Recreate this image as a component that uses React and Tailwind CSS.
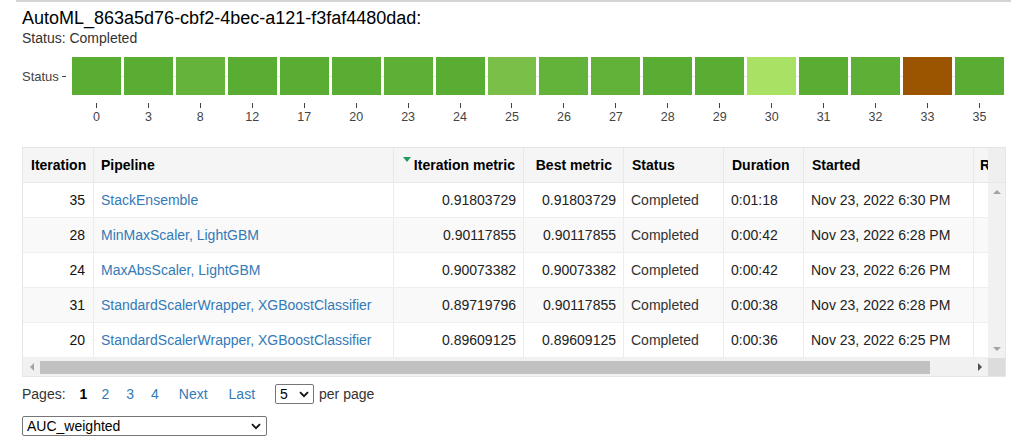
import { useState } from "react";

// Iterations shown in the status strip
const bars = [
  { id: 0, color: "#5aad33" },
  { id: 3, color: "#5aad33" },
  { id: 8, color: "#65b33a" },
  { id: 12, color: "#5aad33" },
  { id: 17, color: "#5aad33" },
  { id: 20, color: "#5aad33" },
  { id: 23, color: "#5eaf36" },
  { id: 24, color: "#5aad33" },
  { id: 25, color: "#7ac048" },
  { id: 26, color: "#63b23a" },
  { id: 27, color: "#62b138" },
  { id: 28, color: "#5aad33" },
  { id: 29, color: "#5aad33" },
  { id: 30, color: "#a9e165" },
  { id: 31, color: "#5aad33" },
  { id: 32, color: "#5eaf35" },
  { id: 33, color: "#9b5400" },
  { id: 35, color: "#5aad33" },
];

const rows = [
  ["35", "StackEnsemble", "0.91803729", "0.91803729", "Completed", "0:01:18", "Nov 23, 2022 6:30 PM"],
  ["28", "MinMaxScaler, LightGBM", "0.90117855", "0.90117855", "Completed", "0:00:42", "Nov 23, 2022 6:28 PM"],
  ["24", "MaxAbsScaler, LightGBM", "0.90073382", "0.90073382", "Completed", "0:00:42", "Nov 23, 2022 6:26 PM"],
  ["31", "StandardScalerWrapper, XGBoostClassifier", "0.89719796", "0.90117855", "Completed", "0:00:38", "Nov 23, 2022 6:28 PM"],
  ["20", "StandardScalerWrapper, XGBoostClassifier", "0.89609125", "0.89609125", "Completed", "0:00:36", "Nov 23, 2022 6:25 PM"],
];

const Chevron = () => (
  <svg width="10" height="7" viewBox="0 0 10 7">
    <path d="M1 1.2 L5 5.2 L9 1.2" fill="none" stroke="#111" strokeWidth="1.8" />
  </svg>
);

export default function App() {
  const [page, setPage] = useState(1);

  return (
    <div className="w-[1021px] h-[446px] bg-white overflow-hidden text-[#222]" style={{ fontFamily: '"Liberation Sans", Arial, sans-serif' }}>
      <div className="ml-[16px] w-[995px] h-[2px] bg-[#d4d4d4]" />

      <div className="pl-[22px]">
        <div className="mt-[6px] text-[18px] leading-[21px] text-black">
          AutoML_863a5d76-cbf2-4bec-a121-f3faf4480dad:
        </div>
        <div className="mt-[1px] text-[14px] leading-[16px] text-[#333]">Status: Completed</div>

        {/* status strip */}
        <div className="flex mt-[11px]">
          <div className="w-[50px] h-[38px] flex items-center justify-end text-[13px] text-[#444]">
            <span className="mt-[1px]">Status</span>
            <span className="w-[5px] h-px bg-[#444] ml-[3px] mr-[6px]" />
          </div>
          <div className="relative w-[932px] h-[38px]">
            <div className="absolute left-0 right-0 top-[19px] h-px bg-[#e6e6e6]" />
            <div className="relative flex gap-[3px] h-full">
              {bars.map((b) => (
                <div key={b.id} className="flex-1" style={{ backgroundColor: b.color }} />
              ))}
            </div>
          </div>
        </div>
        <div className="flex ml-[50px] w-[932px] gap-[3px]">
          {bars.map((b) => (
            <div key={b.id} className="flex-1 flex flex-col items-center">
              <div className="mt-[8px] w-px h-[5px] bg-[#444]" />
              <div className="mt-[2px] text-[12.5px] leading-[14px] text-[#444]">{b.id}</div>
            </div>
          ))}
        </div>

        {/* runs table */}
        <div className="mt-[23px] w-[984px] border border-[#e6e6e6] text-[14px]">
          <div className="flex">
            <div className="w-[965px] overflow-hidden">
              <div className="flex h-[35px] bg-[#f5f5f5] border-b border-[#e8e8e8] font-bold text-black whitespace-nowrap">
                <div className="w-[71px] shrink-0 border-r border-[#e8e8e8] pl-[8px] flex items-center">Iteration</div>
                <div className="w-[300px] shrink-0 border-r border-[#e8e8e8] pl-[7px] flex items-center">Pipeline</div>
                <div className="w-[130px] shrink-0 border-r border-[#e8e8e8] pr-[8px] flex items-center justify-end">
                  <span className="mb-[12px] mr-[3px] w-0 h-0 border-l-[4px] border-r-[4px] border-t-[5px] border-l-transparent border-r-transparent border-t-[#1e9c5a]" />
                  Iteration metric
                </div>
                <div className="w-[100px] shrink-0 border-r border-[#e8e8e8] pr-[11px] flex items-center justify-end">Best metric</div>
                <div className="w-[100px] shrink-0 border-r border-[#e8e8e8] pl-[8px] flex items-center">Status</div>
                <div className="w-[80px] shrink-0 border-r border-[#e8e8e8] pl-[8px] flex items-center">Duration</div>
                <div className="w-[170px] shrink-0 border-r border-[#e8e8e8] pl-[8px] flex items-center">Started</div>
                <div className="w-[100px] shrink-0 pl-[6px] flex items-center">Run Id</div>
              </div>
              {rows.map((r, i) => (
                <div
                  key={i}
                  className={`flex h-[35px] border-b border-[#efefef] whitespace-nowrap ${i % 2 === 1 ? "bg-[#f9f9f9]" : "bg-white"}`}
                >
                  <div className="w-[71px] shrink-0 border-r border-[#ececec] pr-[8px] flex items-center justify-end text-[#111]">{r[0]}</div>
                  <div className="w-[300px] shrink-0 border-r border-[#ececec] pl-[7px] flex items-center text-[#337ab7]">{r[1]}</div>
                  <div className="w-[130px] shrink-0 border-r border-[#ececec] pr-[7px] flex items-center justify-end">{r[2]}</div>
                  <div className="w-[100px] shrink-0 border-r border-[#ececec] pr-[7px] flex items-center justify-end">{r[3]}</div>
                  <div className="w-[100px] shrink-0 border-r border-[#ececec] pl-[7px] flex items-center text-[#333]">{r[4]}</div>
                  <div className="w-[80px] shrink-0 border-r border-[#ececec] pl-[7px] flex items-center">{r[5]}</div>
                  <div className="w-[170px] shrink-0 border-r border-[#ececec] pl-[7px] flex items-center">{r[6]}</div>
                  <div className="w-[100px] shrink-0" />
                </div>
              ))}
            </div>
            <div className="w-[17px] flex flex-col">
              <div className="h-[35px] bg-[#efefef] border-b border-[#e8e8e8]" />
              <div className="flex-1 bg-[#f1f1f1] flex flex-col justify-between items-center py-[7px]">
                <span className="w-0 h-0 border-l-[4px] border-r-[4px] border-b-[4px] border-l-transparent border-r-transparent border-b-[#a3a3a3]" />
                <span className="w-0 h-0 border-l-[4px] border-r-[4px] border-t-[4px] border-l-transparent border-r-transparent border-t-[#a3a3a3]" />
              </div>
            </div>
          </div>
          <div className="flex h-[18px]">
            <div className="w-[965px] bg-[#f1f1f1] flex items-center">
              <div className="w-[17px] flex justify-center">
                <span className="w-0 h-0 border-t-[4px] border-b-[4px] border-r-[4px] border-t-transparent border-b-transparent border-r-[#a3a3a3]" />
              </div>
              <div className="w-[890px] h-[13px] bg-[#c1c1c1]" />
              <div className="flex-1" />
              <div className="w-[17px] flex justify-center">
                <span className="w-0 h-0 border-t-[4px] border-b-[4px] border-l-[4px] border-t-transparent border-b-transparent border-l-[#505050]" />
              </div>
            </div>
            <div className="w-[17px] bg-[#dcdcdc]" />
          </div>
        </div>

        {/* pagination */}
        <div className="mt-[7px] h-[20px] flex items-center text-[14px] text-[#333] whitespace-nowrap">
          <span>Pages:</span>
          {[1, 2, 3, 4].map((p, i) => (
            <span
              key={p}
              onClick={() => setPage(p)}
              className={`${i < 2 ? "ml-[14px]" : "ml-[17px]"} cursor-pointer ${page === p ? "font-bold text-black" : "text-[#337ab7]"}`}
            >
              {p}
            </span>
          ))}
          <span className="ml-[20px] text-[#337ab7]">Next</span>
          <span className="ml-[21px] text-[#337ab7]">Last</span>
          <div className="ml-[20px] w-[39px] h-[20px] border border-[#767676] rounded-[2px] flex items-center justify-between pl-[4px] pr-[4px] text-black">
            <span>5</span>
            <Chevron />
          </div>
          <span className="ml-[5px]">per page</span>
        </div>

        <div className="mt-[12px] w-[245px] h-[20px] border border-[#767676] rounded-[2px] flex items-center justify-between pl-[4px] pr-[5px] text-[14px] text-black">
          <span>AUC_weighted</span>
          <Chevron />
        </div>
      </div>
    </div>
  );
}
